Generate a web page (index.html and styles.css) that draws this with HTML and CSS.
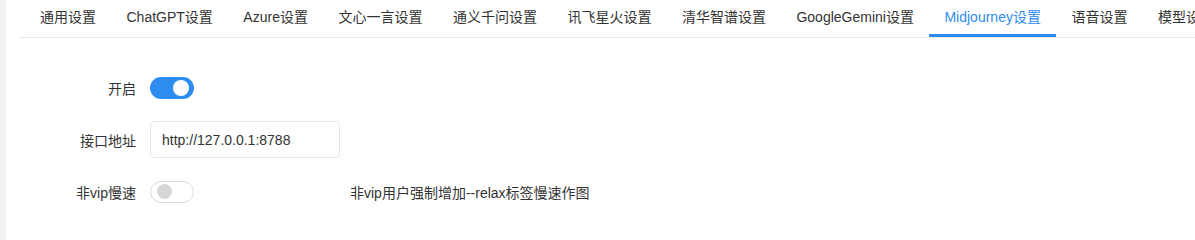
FILE: index.html
```
<!DOCTYPE html>
<html lang="zh-CN">
<head>
<meta charset="utf-8">
<title>设置</title>
<link rel="stylesheet" href="styles.css">
</head>
<body>
<div class="page">
  <div class="card">
    <div class="tabs">
      <div class="tab">通用设置</div>
      <div class="tab">ChatGPT设置</div>
      <div class="tab">Azure设置</div>
      <div class="tab">文心一言设置</div>
      <div class="tab">通义千问设置</div>
      <div class="tab">讯飞星火设置</div>
      <div class="tab">清华智谱设置</div>
      <div class="tab">GoogleGemini设置</div>
      <div class="tab active">Midjourney设置</div>
      <div class="tab">语音设置</div>
      <div class="tab">模型设置</div>
    </div>
    <div class="form">
      <div class="row">
        <div class="label">开启</div>
        <div class="control"><span class="switch on"><span class="knob"></span></span></div>
      </div>
      <div class="row">
        <div class="label">接口地址</div>
        <div class="control"><input class="input" type="text" value="http://127.0.0.1:8788"></div>
      </div>
      <div class="row">
        <div class="label">非vip慢速</div>
        <div class="control"><span class="switch off"><span class="knob"></span></span></div>
        <div class="help">非vip用户强制增加--relax标签慢速作图</div>
      </div>
    </div>
  </div>
</div>
</body>
</html>
```
FILE: styles.css
```
html {
  background: linear-gradient(to right, #f2f2f2 6px, #fff 6px);
}

body {
  margin: 0;
  padding: 0;
  font-family: "Liberation Sans", "Noto Sans CJK SC", sans-serif;
  font-size: 14px;
  color: #333;
  overflow: hidden;
}

.page {
  padding-left: 6px;
  min-height: 100vh;
}

.card {
  background: #fff;
  padding-left: 14px;
  overflow: hidden;
}

.tabs {
  display: flex;
  white-space: nowrap;
  padding-left: 5px;
  border-bottom: 1px solid #e8e8e8;
  height: 37px;
  overflow: hidden;
}

.tab {
  flex: none;
  padding: 0 15px;
  height: 34px;
  line-height: 35px;
  border-bottom: 3px solid transparent;
  margin-right: 0.5px;
}

.tab.active {
  color: #2d8cf0;
  border-bottom-color: #2d8cf0;
}

.form {
  padding-top: 31px;
}

.row {
  display: flex;
  align-items: center;
  height: 37px;
  margin-bottom: 15px;
}

.label {
  width: 116px;
  padding-right: 14px;
  text-align: right;
  flex: none;
}

.control {
  width: 190px;
  flex: none;
  display: flex;
  align-items: center;
}

.input {
  width: 190px;
  height: 37px;
  box-sizing: border-box;
  border: 1px solid #e6e6e6;
  border-radius: 4px;
  padding: 0 11px;
  font-family: "Liberation Sans", "Noto Sans CJK SC", sans-serif;
  font-size: 14px;
  color: #333;
  outline: none;
}

.switch {
  display: flex;
  align-items: center;
  width: 44px;
  height: 22px;
  box-sizing: border-box;
  border-radius: 11px;
  padding: 0 3px;
}

.switch.on {
  background: #2d8cf0;
  justify-content: flex-end;
  padding-right: 5px;
}

.switch.off {
  background: #fff;
  border: 1px solid #dcdcdc;
  justify-content: flex-start;
  padding-left: 6px;
}

.knob {
  width: 16px;
  height: 16px;
  border-radius: 50%;
  background: #fff;
}

.switch.off .knob {
  width: 15px;
  height: 15px;
  background: #d6d6d6;
}

.help {
  margin-left: 10px;
}
```
